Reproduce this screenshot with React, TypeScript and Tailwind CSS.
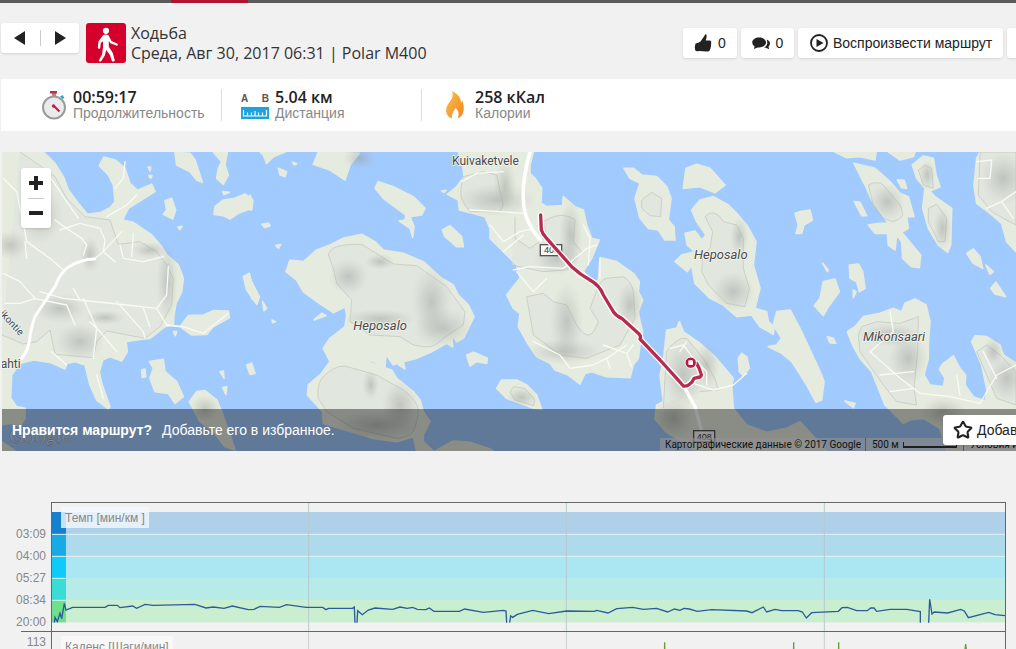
import type { ReactNode } from "react";
import { Star } from "lucide-react";

// map and chart drawings use three units per pixel
const islandTiles = [
  {
    x: 0,
    paths: [
      "M6 21L130 21L165 55L190 95L205 135L235 175L262 208L300 203L330 188L345 170L340 120L325 90L298 62L312 36L345 45L375 70L390 115L412 136L455 118L465 140L385 190L368 225L400 232L455 270L485 305L500 330L535 360L550 400L545 440L528 475L522 510L520 540L495 545L450 580L420 583L378 590L382 620L365 648L330 635L308 645L298 680L305 715L330 785L325 792L290 765L270 720L255 660L225 650L200 655L195 672L150 652L100 645L60 655L35 690L32 760L50 785L75 790L75 820L60 845L30 835L0 840Z",
      "M525 22L570 25L585 45L595 75L607 112L590 105L570 80L530 60Z",
      "M640 21L682 21L675 60L685 90L670 118L650 100L655 70L665 50Z",
      "M645 185L670 165L705 160L735 147L758 165L755 190L715 205L690 222L670 212L642 208Z",
      "M495 167L515 160L527 195L518 222L490 208L500 195Z",
      "M444 66L452 66L450 78Z M446 92L456 92L452 100Z M534 246L546 244L540 254Z M668 140L688 142L672 149Z",
      "M730 395L748 385L755 415L778 455L770 478L740 435Z",
      "M540 545L565 512L610 510L640 497L685 498L688 518L640 545L620 568L575 570Z",
      "M448 650L490 643L495 680L530 710L550 755L525 775L505 745L465 740L450 700L460 670Z",
      "M568 770L590 740L615 737L650 765L665 800L690 870L705 915L675 905L640 860L600 830Z",
      "M425 675L435 672L437 695L427 697Z M660 680L670 678L672 700Z M668 728L680 725L678 748Z M740 660L755 655L765 685L750 688Z",
      "M520 560L530 560L526 572Z M6 890L45 918L6 918Z",
    ],
  },
  {
    x: 750,
    paths: [
      "M108 380L120 345L160 350L200 315L240 300L280 280L335 268L375 290L400 315L460 325L520 350L575 400L610 420L625 450L655 480L672 515L655 550L640 580L620 590L605 570L608 605L590 595L545 620L500 640L460 650L465 672L440 655L430 660L408 628L405 665L370 650L340 635L365 655L425 675L440 700L490 740L510 765L520 800L540 830L520 870L520 890L550 918L500 918L490 875L440 890L370 880L270 850L220 835L218 800L172 750L175 720L215 685L240 650L220 610L240 580L285 545L290 510L285 485L250 503L200 470L160 440L140 405Z",
      "M190 58L205 21L328 25L300 60L285 105L240 75Z",
      "M375 130L385 110L430 125L490 155L525 190L515 210L480 215L492 245L488 277L480 250L448 228L465 225L468 210L400 160Z",
      "M577 255L600 242L635 275L640 305L620 305L585 275Z",
      "M30 21L105 21L70 35L50 55L40 30Z M85 70L110 80L105 95L90 90Z M128 52L140 56L132 60Z",
      "M36 238L55 234L60 242L45 248Z M77 302L92 299L86 309Z M192 525L215 505L228 512Z",
      "M0 400L25 450L22 475L5 460Z M38 470L50 490L42 497Z M0 150L8 170L5 195L0 195Z M66 525L76 530L68 533Z",
      "M650 630L670 622L690 630L712 640L710 655L680 650L660 663Z",
      "M555 918L610 888L660 892L720 912L730 918Z",
    ],
  },
  {
    x: 1320,
    paths: [
      "M55 21L68 60L72 95L50 125L22 148L55 165L58 195L100 205L135 215L150 250L150 280L185 315L230 360L240 400L200 450L220 490L240 505L235 545L260 590L290 635L330 655L345 675L385 690L420 717L435 685L455 680L500 695L570 698L580 660L595 640L600 600L608 560L598 520L595 500L608 465L595 440L598 410L580 385L530 350L480 338L475 410L455 405L430 380L455 340L478 285L455 280L440 240L430 195L405 185L370 155L368 182L320 185L303 175L305 130L285 100L270 85L270 60L280 21Z",
      "M170 730L185 705L230 705L260 720L290 750L305 793L280 790L200 760Z",
      "M5 138L18 136L12 142Z",
    ],
  },
  {
    x: 1800,
    paths: [
      "M72 70L100 70L125 90L170 95L200 125L213 160L205 225L222 245L225 285L195 285L175 255L145 250L120 220L105 160L120 115L90 100Z",
      "M258 70L290 58L330 70L375 120L345 143L300 125L250 130Z",
      "M275 195L300 165L340 155L385 180L410 205L440 240L468 290L460 360L480 430L465 490L500 500L505 530L522 545L520 568L480 545L455 510L410 515L370 480L330 460L285 415L275 360L262 380L225 350L245 330L285 320L262 300L255 265L285 258L305 285L318 270L290 230Z",
      "M530 500L570 495L600 550L635 625L665 690L672 710L665 765L648 772L620 720L600 688L575 650L545 625L505 605L530 600L545 580L520 540Z",
      "M585 205L600 200L630 195L637 225L612 240L605 265L588 265L595 240Z",
      "M200 555L230 550L238 530L250 560L300 595L345 635L400 700L395 720L400 790L440 840L500 862L560 850L600 830L680 918L290 918L200 862L165 822L170 780L190 770L180 690L190 650Z",
      "M415 640L425 625L440 635L448 670L430 692L418 680Z",
    ],
  },
  {
    x: 2400,
    paths: [
      "M105 21L228 21L225 45L180 35L140 38Z M265 21L345 21L340 35L300 45Z",
      "M162 55L225 70L270 110L300 145L325 155L342 215L320 215L325 250L305 262L345 310L362 330L358 368L335 365L308 340L305 290L290 270L285 315L265 300L262 265L225 265L205 240L235 235L265 235L215 165L195 120Z",
      "M337 60L370 33L400 40L408 90L420 125L390 138L405 155L455 190L452 300L443 322L415 300L385 250L368 190L375 130L350 100Z",
      "M163 170L180 172L200 212L185 212Z M292 105L312 105L320 130L305 128Z",
      "M530 40L540 21L648 21L648 320L620 290L605 235L570 205L530 175L522 120Z",
      "M500 325L520 312L540 335L548 370L520 355Z M558 360L580 380L570 388Z M572 430L588 412L617 455L585 447Z",
      "M148 360L175 357L188 380L195 430L178 440L170 410L150 400Z M160 435L168 440L160 458Z M68 355L85 375L82 380Z",
      "M70 410L105 402L118 440L85 485L70 512L43 482L60 460Z",
      "M142 560L165 545L190 515L240 505L280 490L305 500L315 475L345 462L378 480L390 530L385 600L385 640L372 690L390 720L430 725L435 700L418 672L430 655L460 633L480 670L497 690L495 720L520 755L555 768L562 740L545 660L515 590L525 572L560 575L600 600L610 630L648 655L648 918L440 918L420 850L370 820L330 825L310 835L290 815L255 780L235 730L215 680L180 640L160 605Z",
      "M82 575L100 580L107 595L90 593Z M135 768L165 775L160 788Z",
    ],
  },
];

const contours = [
  "M60 21L125 65L165 95L200 160L255 215L330 225L345 270L355 298L420 290L470 320L500 360L520 400L515 480L480 545L435 580L320 558L290 590L280 638L165 628L150 555L110 590L70 597L6 570",
  "M985 330Q990 312 1010 305T1085 298L1180 357L1250 362L1340 425L1395 500L1390 540L1330 580Q1310 602 1290 605T1240 600L1200 575L1110 570L1050 530L1055 465L1010 415L1000 370Z",
  "M955 760Q950 725 965 700Q1000 662 1035 663L1130 690L1210 735Q1255 770 1255 795T1240 860Q1225 878 1190 880L1060 850L980 800Z",
  "M1390 95Q1378 140 1385 160T1410 200L1500 200L1510 180L1490 90L1450 80Z",
  "M1545 215L1545 280L1590 310L1640 275L1630 230Q1670 205 1700 213T1725 230L1720 290L1745 320L1700 375L1630 380L1535 360",
  "M1580 455L1630 445L1660 470L1700 480L1730 540Q1750 570 1765 570T1795 530L1770 490L1785 450Q1800 402 1820 400T1870 395Q1895 410 1900 440L1905 520L1860 600L1760 640L1680 630L1600 570Z",
  "M1925 165L1955 142L1985 160L1982 215L1950 212L1925 190Z",
  "M2115 215Q2130 200 2145 205T2170 230L2210 240L2230 280L2230 370L2248 430L2235 485L2180 475L2125 420L2105 380L2108 330L2130 310L2138 260Z",
  "M1990 790L1995 700L2000 620Q2030 575 2060 580L2110 640L2145 700L2155 735L2100 740",
  "M2605 120Q2620 110 2645 115L2700 180Q2712 205 2705 215T2680 230L2650 220L2620 180Z",
  "M2755 75L2775 60L2795 70L2800 130L2770 120Z M2785 190L2810 178L2840 220L2835 290L2815 290L2785 230Z",
  "M2575 570L2585 545L2630 530L2700 535L2755 515L2753 620L2742 730L2750 780L2690 770L2650 720L2580 620Z",
  "M2940 21L2935 150L2975 200L3010 220L3048 240V21Z M2930 620L2960 600L3000 630L3048 680V780L2990 760Z",
  "M1530 742L1540 725L1575 730L1605 765L1600 782L1545 765Z",
];

const minorRoads = [
  "M10 100L50 140L75 260L80 290L150 340L190 375M75 290L80 340M180 255L240 235L300 250L315 285L310 320L345 350M365 260L310 320L285 340M400 265L395 335",
  "M360 300L370 340L430 350L490 335M130 70L160 110L200 170L235 220M165 225L200 250L245 280L260 300L250 330M375 50L370 100L345 130",
  "M410 150L380 180L320 215M10 385L60 410L105 460L60 475L15 475M120 440L190 460L240 465L380 480L470 490L500 540L540 545M250 460L290 550L280 640",
  "M350 470L430 560L435 580M430 490L450 545M470 490L500 450L505 365M270 530L300 560L350 620M290 690L310 760M155 620L200 660",
  "M220 430L240 465M100 460L200 480L225 540M500 540L550 545L610 565L685 505",
  "M1385 110L1430 85L1510 80M1410 195L1500 200L1570 205M1470 240L1510 290L1560 260L1600 250M1510 320L1570 270M1540 375L1590 365L1690 370L1760 310L1790 300",
  "M1550 380L1600 440L1640 400M1600 590L1680 630L1710 670L1780 660L1820 640L1880 600M1810 600L1880 625L1900 600M1820 640L1830 670M1880 625L1895 665M1750 240L1770 280L1765 360",
  "M1800 340L1800 400M2010 610L2050 600L2080 640L2120 680L2120 720M2060 590L2040 620M2080 715L2140 735L2200 720L2240 685",
  "M2670 500L2680 560L2610 620L2700 700L2760 745L2850 755L2940 775L2990 690L3048 660M2640 690L2740 680M2670 740L2740 730M2950 620L2990 700M2870 690L2880 750",
  "M2930 50L2975 45L2970 100L2935 100M2960 190L3005 170L3040 220M3005 170L3048 140",
];

const shades = [
  [502, 410, 32, 120], [315, 518, 60, 22], [240, 590, 75, 55], [270, 330, 30, 55], [450, 315, 55, 25], [30, 300, 55, 45], [180, 490, 80, 45], [120, 210, 70, 90],
  [1045, 395, 60, 55], [1140, 350, 45, 25], [1295, 470, 60, 110], [1140, 522, 110, 30], [1330, 550, 90, 60], [1112, 720, 25, 45], [1130, 840, 130, 45], [1200, 780, 55, 75],
  [1490, 165, 120, 50], [1515, 120, 35, 80], [1712, 270, 35, 110], [1700, 530, 50, 120], [1890, 480, 40, 70], [1565, 757, 45, 28], [1670, 340, 70, 50], [1690, 620, 110, 40],
  [2218, 275, 28, 60], [2200, 440, 65, 60], [2050, 690, 60, 110], [2020, 820, 60, 60], [2120, 660, 40, 70], [2662, 170, 55, 55], [2828, 250, 28, 65], [2782, 90, 24, 45],
  [2830, 800, 70, 45], [3020, 700, 55, 70], [2725, 640, 60, 80], [2980, 620, 30, 45], [2670, 570, 90, 35], [3010, 100, 70, 80], [615, 790, 45, 40], [1080, 40, 50, 35],
];

const track =
  "M1622 210L1624 255Q1628 268 1640 280L1715 365Q1740 388 1770 405T1810 450Q1828 480 1840 500Q1850 514 1865 520L1918 568Q1924 575 1920 582L1980 645L2030 700L2050 723Q2062 724 2068 718Q2078 712 2082 700L2100 696Q2106 692 2103 686Q2098 668 2090 655";

const bands = [
  { y: 66, strong: "#1680cf", soft: "#b0cfe9" },
  { y: 132, strong: "#17aae4", soft: "#aedaeb" },
  { y: 198, strong: "#10cbfa", soft: "#aae7f2" },
  { y: 264, strong: "#3addd6", soft: "#b7ebe8" },
  { y: 330, strong: "#6fe18c", soft: "#c9efd0" },
];

const paceLine =
  "M163 398L165 382L172 395L180 370L185 386L193 340L198 360L218 352L315 352L325 346L352 346L360 353L398 348L410 355L435 343L460 346L585 343L618 354L640 351L672 355L697 348L745 359L762 358L780 349L838 352L860 344L918 352L968 352L978 359L986 355L1020 355L1058 355L1063 351L1065 398M1071 398L1073 362L1087 374L1105 360L1125 354L1178 358L1200 351L1222 355L1238 352L1252 358L1278 359L1288 354L1302 364L1378 364L1394 357L1450 367L1510 361L1518 363L1520 398M1529 398L1532 378L1538 382L1552 373L1598 361L1646 371L1700 363L1783 364L1790 361L1824 369L1850 356L1898 352L1930 358L1970 355L2003 366L2023 357L2040 361L2052 355L2068 357L2092 364L2135 359L2240 363L2256 368L2290 351L2300 366L2325 358L2345 362L2395 362L2407 366L2419 384L2435 368L2515 364L2526 353L2542 352L2570 362L2602 362L2612 354L2622 354L2630 364L2670 358L2720 358L2761 365L2761 398M2786 398L2789 328L2796 372L2803 366L2843 369L2882 358L2893 363L2905 383L2966 367L2985 374L3015 377";

function MapDrawing() {
  return (
    <svg viewBox="6 21 3042 897" preserveAspectRatio="xMinYMin slice" className="block h-[299px] w-full" aria-label="Карта маршрута">
      <defs>
        <radialGradient id="shade">
          <stop offset="0" stopColor="#8f9692" stopOpacity="0.42" />
          <stop offset="0.5" stopColor="#9ca39f" stopOpacity="0.22" />
          <stop offset="1" stopColor="#b0b7b0" stopOpacity="0" />
        </radialGradient>
      </defs>
      <rect x="0" y="0" width="3100" height="918" fill="#a1caff" />
      {islandTiles.map((tile) => (
        <g key={tile.x} transform={`translate(${tile.x} 0)`} fill="#e6ebdf" stroke="#e6ebdf" strokeWidth="5" strokeLinejoin="round">
          {tile.paths.map((d) => (
            <path key={d} d={d} />
          ))}
        </g>
      ))}
      <g fill="#dde3dd" fillOpacity="0.6" stroke="#bfc4b9" strokeWidth="2" strokeLinejoin="round">
        {contours.map((d) => (
          <path key={d} d={d} />
        ))}
      </g>
      {shades.map(([cx, cy, rx, ry]) => (
        <ellipse key={`${cx}-${cy}`} cx={cx} cy={cy} rx={rx} ry={ry} fill="url(#shade)" />
      ))}
      <g fill="none" stroke="#fff" strokeLinejoin="round" strokeLinecap="round">
        {minorRoads.map((d) => (
          <path key={d} d={d} stroke="#f9faf5" strokeWidth="4" />
        ))}
        <path d="M65 640Q82 620 88 590Q92 550 105 515Q130 475 165 425Q180 385 200 370Q240 342 285 342" strokeWidth="9" />
        <path d="M1590 21Q1568 100 1570 150Q1568 200 1590 240Q1600 262 1622 285" strokeWidth="11" />
        <path d="M2055 730L2085 785L2105 860" strokeWidth="10" />
      </g>
      <g fill="#fff" fillOpacity="0.8" stroke="#555" strokeWidth="4">
        <rect x="1621" y="299" width="64" height="33" />
        <rect x="2081" y="857" width="63" height="34" />
      </g>
      <g className="font-['Liberation_Sans',sans-serif] text-[27px]" fill="#333">
        <text x="1632" y="325">408</text>
        <text x="2090" y="884">408</text>
      </g>
      <path d={track} fill="none" stroke="#fff" strokeWidth="18" strokeLinejoin="round" strokeLinecap="round" />
      <path d={track} fill="none" stroke="#b52c50" strokeWidth="10" strokeLinejoin="round" strokeLinecap="round" />
      <circle cx="2072" cy="653" r="17" fill="#bd1744" stroke="#fff" strokeWidth="3" />
      <rect x="2065" y="646" width="14" height="14" rx="2" fill="#fff" />
      <g className="font-[Roboto,sans-serif]" fill="#4b4b4b" stroke="#f2f4ee" strokeWidth="5" strokeLinejoin="round" paintOrder="stroke">
        <text x="1356" y="60" className="text-[36px]">Kuivaketvele</text>
        <text x="1060" y="556" className="text-[39px] italic">Heposalo</text>
        <text x="2082" y="342" className="text-[39px] italic">Heposalo</text>
        <text x="2589" y="588" className="text-[39px] italic">Mikonsaari</text>
        <text x="2" y="668" className="text-[36px]">ahti</text>
        <text transform="translate(-2 508) rotate(47)" className="text-[30px]">ikontie</text>
      </g>
      <text x="27" y="893" fill="#fff" fillOpacity="0.6" stroke="#777" strokeWidth="1" className="font-[Lato,sans-serif] text-[60px]">
        Google
      </text>
    </svg>
  );
}

function WalkIcon() {
  return (
    <svg viewBox="0 0 40 40" className="size-10 shrink-0 rounded-[3px] bg-[#d4002b]" aria-hidden="true">
      <circle cx="20" cy="7.8" r="3.1" fill="#fff" />
      <path d="M17 12.2Q20 11 22.5 12.2L25.5 18L31.5 20.8Q32.6 22 31 22.8L24.4 20.2L22.8 17.8L22.8 23.8L26.8 30L28.8 37.4Q28.2 39 26 38.2L23.8 31.8L20.2 27L18.8 32.6L15 38.4Q13.4 39 12.8 37.4L16 31.6L17 24.6L17 18.2L14.8 20L14.2 25.4Q12.6 26.4 11.8 25L12.4 18.4Z" fill="#fff" />
    </svg>
  );
}

function ThumbIcon() {
  return (
    <svg viewBox="0 0 18 20" className="h-5 w-[18px]" aria-hidden="true">
      <path d="M1.500 10.500Q4.500 10 6.500 8.500L10 3.500L11.500 1Q13.200 1.800 12.600 4L11.800 7.500H16Q17.600 7.800 17.200 9.500Q17.400 13.500 16 17Q15 18.800 12.500 18.500L5 18Q2 18.600 1.200 17.200Q.4 13.500 1.500 10.500Z" fill="#222" />
    </svg>
  );
}

function ChatIcon() {
  return (
    <svg viewBox="0 0 18 13" className="h-[13px] w-[18px]" aria-hidden="true">
      <path d="M14.600 2.500Q18 3.800 18 6.600Q18 8.600 16.500 9.800L17.200 12.200L13.800 10.700L12.200 10.800Q15.500 8.500 15.300 5.500Q15.300 3.800 14.600 2.500Z" fill="#222" />
      <path d="M7.200 .5C11 .5 14 2.600 14 5.500C14 8.400 11 10.500 7.200 10.500L5.600 10.400L2 12L2.600 9.300Q.2 7.800 .2 5.500C.2 2.600 3.400 .5 7.200 .5Z" fill="#222" />
    </svg>
  );
}

function StopwatchIcon() {
  return (
    <svg viewBox="0 0 26 30" className="h-[30px] w-[26px]" aria-hidden="true">
      <rect x="11" y="3" width="4" height="4" fill="#b1848a" />
      <rect x="9" y="1" width="7" height="2.5" fill="#c03048" />
      <path d="M19 6.500L21.500 5L23.500 8L21.500 9Z" fill="#37a3c4" />
      <circle cx="13" cy="17.500" r="11" fill="#ebebeb" stroke="#9b9b9b" strokeWidth="2" />
      <path d="M12.500 15.500L18.500 21.500" stroke="#c81e45" strokeWidth="2.2" />
      <circle cx="12.500" cy="16" r="1.700" fill="#c81e45" />
    </svg>
  );
}

function DistanceIcon() {
  return (
    <div className="w-7" aria-hidden="true">
      <div className="flex justify-between font-['Liberation_Sans',sans-serif] text-[10px] leading-4 font-bold text-[#555]">
        <span>A</span>
        <span>B</span>
      </div>
      <svg viewBox="0 0 28 12" className="h-3 w-7">
        <rect width="28" height="12" fill="#1fa3dc" />
        <path d="M2.5 3V9H25.5V3M6.5 9V5.5M10.5 9V5.5M14 9V4M17.5 9V5.5M21.5 9V5.5" fill="none" stroke="#fff" strokeWidth="1.2" />
      </svg>
    </div>
  );
}

function FlameIcon() {
  return (
    <svg viewBox="0 0 28 28" className="size-7" aria-hidden="true">
      <defs>
        <linearGradient id="flame" x1="0" y1="0" x2="1" y2="1">
          <stop offset="0" stopColor="#fcc24a" />
          <stop offset="1" stopColor="#ee8420" />
        </linearGradient>
      </defs>
      <path d="M11 0C17 3 20 7 20 12L21.500 9.500C23 15 23.500 20 21 24Q19.500 26.500 16.500 27.500C19 23 17 19 14.500 17C13 20 10.500 22 11 27.500Q6.500 25.500 5.500 22C4 17 7 13 10 9C12 6 12 3 11 0Z" fill="url(#flame)" />
    </svg>
  );
}

function Stat({ icon, value, label }: { icon: ReactNode; value: string; label: string }) {
  return (
    <div className="flex w-[200px] items-center gap-1.5 border-l border-[#ddd] pl-[19px] first:w-[180px] first:border-l-0 first:pl-0">
      {icon}
      <div>
        <div className="font-['Open_Sans',sans-serif] text-base leading-4 font-semibold text-[#222]">{value}</div>
        <div className="text-sm leading-4 text-[#888]">{label}</div>
      </div>
    </div>
  );
}

const buttonClass = "flex h-[30px] shrink-0 items-center rounded-[3px] bg-white text-sm whitespace-nowrap text-[#222] shadow-sm";

export default function App() {
  return (
    <main className="h-screen overflow-hidden bg-[#f1f1f1] font-['Liberation_Sans',sans-serif] text-[#222]">
      <div className="h-[3px] bg-[#5a5a5a] pl-[171px]">
        <div className="h-full w-[77px] bg-[#b0122f]" />
      </div>

      <header className="flex h-[76px] items-start pt-5">
        <div className={`${buttonClass} ml-px w-[78px]`}>
          <button type="button" aria-label="Предыдущая" className="flex flex-1 justify-center">
            <svg viewBox="0 0 12 16" className="h-4 w-3"><path d="M11 1V15L0 8Z" fill="#222" /></svg>
          </button>
          <span className="h-4 w-px bg-[#ccc]" />
          <button type="button" aria-label="Следующая" className="flex flex-1 justify-center">
            <svg viewBox="0 0 12 16" className="h-4 w-3"><path d="M1 1V15L12 8Z" fill="#222" /></svg>
          </button>
        </div>
        <div className="ml-[7px] flex min-w-0 flex-1 gap-[5px]">
          <WalkIcon />
          <h1 className="font-['Open_Sans',sans-serif] text-base leading-5 whitespace-nowrap text-[#333]">
            Ходьба
            <br />
            Среда, Авг 30, 2017 06:31 | Polar M400
          </h1>
        </div>
        <div className="-mr-8 flex gap-1 pt-[5px]">
          <button type="button" className={`${buttonClass} w-[54px] justify-center gap-1.5`}>
            <ThumbIcon />0
          </button>
          <button type="button" className={`${buttonClass} w-[53px] justify-center gap-1.5`}>
            <ChatIcon />0
          </button>
          <button type="button" className={`${buttonClass} w-[205px] gap-[5px] pl-3`}>
            <svg viewBox="0 0 18 18" className="size-[18px]">
              <circle cx="9" cy="9" r="8" fill="none" stroke="#222" strokeWidth="1.8" />
              <path d="M6.500 5V13L13.500 9Z" fill="#222" />
            </svg>
            Воспроизвести маршрут
          </button>
          <button type="button" aria-label="Ещё" className={`${buttonClass} w-[41px]`} />
        </div>
      </header>

      <section className="ml-px flex h-[52px] items-center bg-white pl-10">
        <Stat icon={<StopwatchIcon />} value="00:59:17" label="Продолжительность" />
        <Stat icon={<DistanceIcon />} value="5.04 км" label="Дистанция" />
        <Stat icon={<FlameIcon />} value="258 кКал" label="Калории" />
      </section>

      <section className="relative mt-[21px] ml-0.5 h-[299px] overflow-hidden">
        <MapDrawing />
        <div className="absolute right-0 bottom-0 flex h-[13px] w-[356px] items-center overflow-hidden bg-[#f5f5f5]/60 font-[Roboto,sans-serif] text-[10px] whitespace-nowrap text-[#222]">
          <span className="w-[205px] shrink-0 pl-[5px]">Картографические данные © 2017 Google</span>
          <span className="w-[99px] shrink-0 border-x border-[#999] pl-1.5">
            500 м
            <span className="ml-1 inline-block h-1.5 w-[54px] border-x border-b-2 border-[#333]" />
          </span>
          <a href="#terms" className="pl-1.5">Условия использования</a>
        </div>
        <div className="absolute top-4 left-[19px] flex h-[60px] w-[30px] flex-col items-center rounded-[3px] bg-white shadow">
          <button type="button" aria-label="Приблизить" className="flex flex-1 items-center">
            <svg viewBox="0 0 14 14" className="size-3.5"><path d="M5 0H9V5H14V9H9V14H5V9H0V5H5Z" fill="#222" /></svg>
          </button>
          <span className="h-px w-4 bg-[#ccc]" />
          <button type="button" aria-label="Отдалить" className="flex flex-1 items-center">
            <svg viewBox="0 0 14 14" className="size-3.5"><path d="M0 5H14V9H0Z" fill="#222" /></svg>
          </button>
        </div>
        <div className="absolute inset-x-0 bottom-0 flex h-[42px] items-center justify-between bg-black/40 pl-2.5 text-sm text-white">
          <p>
            <strong className="mr-2.5">Нравится маршрут?</strong>
            Добавьте его в избранное.
          </p>
          <button type="button" className={`${buttonClass} -mr-[50px] w-[123px] gap-1 pl-2.5`}>
            <Star size={20} strokeWidth={2.5} strokeLinejoin="miter" />
            Добавить
          </button>
        </div>
      </section>

      <section className="mt-[51px] text-xs text-[#888]">
        <div className="flex h-[129px] pr-2.5">
          <ol className="w-[51px] shrink-0 pt-[21px] pr-[5px] text-right leading-[22px]">
            <li>03:09</li>
            <li>04:00</li>
            <li>05:27</li>
            <li>08:34</li>
            <li>20:00</li>
          </ol>
          <div className="relative flex-1 border border-b-0 border-[#666]">
            <svg viewBox="156 39 2859 384" preserveAspectRatio="none" className="block h-32 w-full" aria-label="Темп">
              {bands.map((band) => (
                <g key={band.y}>
                  <rect x="156" y={band.y} width="2859" height="67" fill={band.soft} />
                  <rect x="156" y={band.y} width="42" height="67" fill={band.strong} />
                </g>
              ))}
              <path d="M156 133H3015M156 199H3015" stroke="#e0f4f8" strokeWidth="3" />
              <path d="M156 265H198M156 331H198" stroke="#d8f6f6" strokeWidth="3" />
              <path d="M926 39V423M1699 39V423M2473 39V423" stroke="#b9c9cf" strokeWidth="3" />
              <path d={paceLine} fill="none" stroke="#2c5b9a" strokeWidth="4" />
            </svg>
            <h2 className="absolute top-1 left-[9px] h-[21px] bg-[#f4f8fc]/80 px-1 leading-[22px]">Темп [мин/км ]</h2>
          </div>
        </div>
        <hr className="mr-2.5 ml-[21px] border-[#666]" />
        <div className="flex h-[60px] pr-2.5">
          <div className="w-[51px] shrink-0 pr-[5px] text-right leading-5">113</div>
          <div className="relative flex-1 border-x border-[#666]">
            <svg viewBox="156 426 2859 180" preserveAspectRatio="none" className="block h-[60px] w-full" aria-label="Каденс">
              <path d="M926 426V606M1699 426V606M2473 426V606" stroke="#ccc" strokeWidth="3" />
              <path d="M1992 606L1994 457L1996 606M2379 606L2381 457L2383 606M2514 606L2516 457L2518 606M2880 606L2897 462L2914 606" fill="none" stroke="#6f9a35" strokeWidth="4" />
            </svg>
            <h2 className="absolute top-1 left-[9px] h-[21px] bg-[#f8f8f8] px-1 leading-[22px]">Каденс [Шаги/мин]</h2>
          </div>
        </div>
      </section>
    </main>
  );
}
